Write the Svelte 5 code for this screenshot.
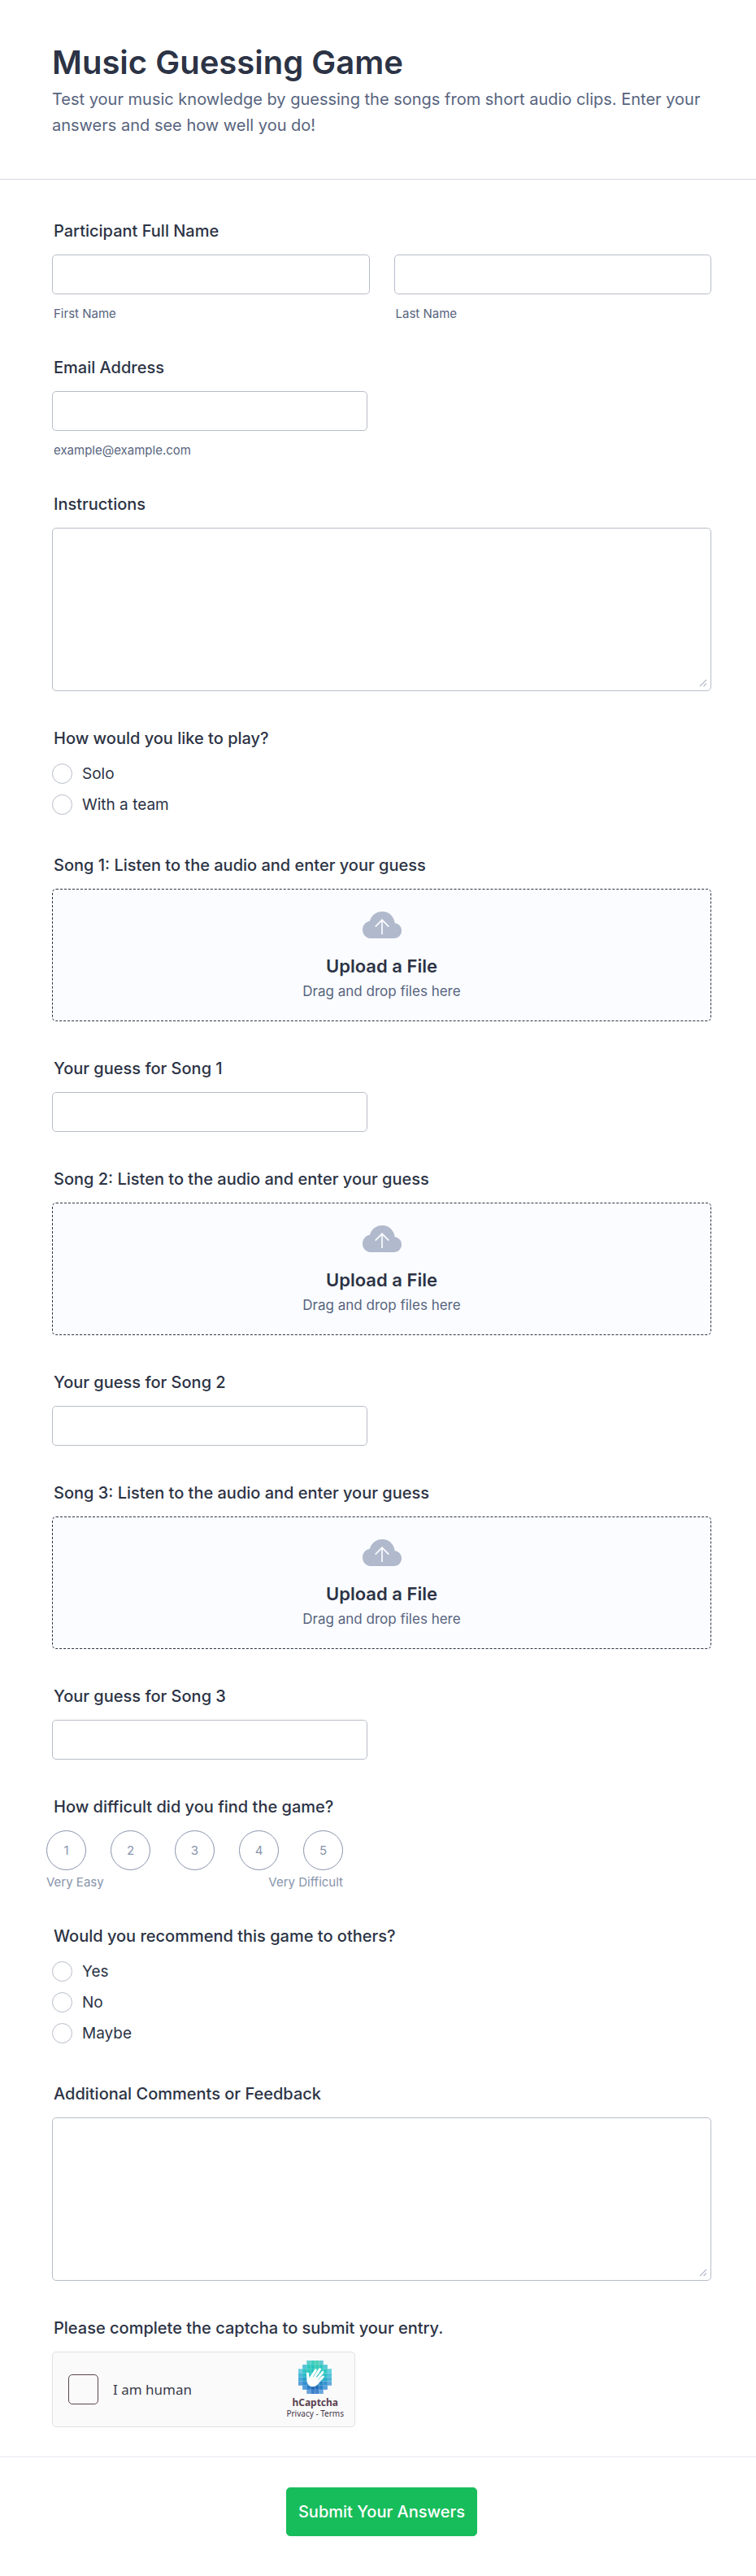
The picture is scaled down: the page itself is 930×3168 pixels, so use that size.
<script>
  const songs = [1, 2, 3];
  const levels = [1, 2, 3, 4, 5];
  const modes = ["Solo", "With a team"];
  const answers = ["Yes", "No", "Maybe"];

  let mode = $state("");
  let recommend = $state("");
  let difficulty = $state(0);

  // captcha badge: 8x8 mosaic, one entry per row
  const mosaic = [
    { from: 2, colours: ["#5fd0cf", "#3fcfc0", "#4bd2b8", "#62c9d4"] },
    { from: 1, colours: ["#55c4d8", "#2fc9bf", "#27c5bb", "#36cdb6", "#2bc8c0", "#58c8d6"] },
    { from: 0, colours: ["#6bcbe0", "#31c5c4", "#2ccabd", "#25c3bd", "#30cbb9", "#28c6be", "#33c8c2", "#66cfdd"] },
    { from: 0, colours: ["#4bb8d9", "#2bbcc8", "#29c6c2", "#23bfc3", "#2bc6c0", "#25c0c2", "#2fc2c6", "#54c2db"] },
    { from: 0, colours: ["#4aa9d8", "#259fc9", "#27b3c7", "#25adc7", "#27b2c5", "#28b0c8", "#2aacca", "#4db4da"] },
    { from: 0, colours: ["#5a9ed9", "#318fcf", "#2683c6", "#288fc7", "#2b95c9", "#298ac7", "#3694d0", "#62a9dd"] },
    { from: 1, colours: ["#529cd8", "#2c7ec8", "#2067b8", "#246fbd", "#2f83ca", "#579fd9"] },
    { from: 2, colours: ["#68a4dc", "#3c80cb", "#3f84ce", "#6ba8dd"] },
  ];
</script>

<form class="form" onsubmit={(e) => e.preventDefault()}>
  <header>
    <h1>Music Guessing Game</h1>
    <p>Test your music knowledge by guessing the songs from short audio clips. Enter your answers and see how well you do!</p>
  </header>

  <div class="questions">
    <fieldset>
      <legend class="title">Participant Full Name</legend>
      <div class="names">
        <div class="stack">
          <input class="box" id="first" type="text" />
          <label class="hint" for="first">First Name</label>
        </div>
        <div class="stack">
          <input class="box" id="last" type="text" />
          <label class="hint" for="last">Last Name</label>
        </div>
      </div>
    </fieldset>

    <div class="stack">
      <label class="title" for="email">Email Address</label>
      <input class="box half" id="email" type="email" aria-describedby="email-hint" />
      <span class="hint" id="email-hint">example@example.com</span>
    </div>

    <div class="stack">
      <label class="title" for="instructions">Instructions</label>
      <textarea class="box" id="instructions"></textarea>
    </div>

    <fieldset>
      <legend class="title">How would you like to play?</legend>
      <div class="options">
        {#each modes as m}
          <label><input type="radio" name="mode" value={m} bind:group={mode} />{m}</label>
        {/each}
      </div>
    </fieldset>

    {#each songs as n}
      <div class="stack">
        <label class="title" for="song-{n}">Song {n}: Listen to the audio and enter your guess</label>
        <label class="drop">
          <input class="sr" id="song-{n}" type="file" accept="audio/*" />
          <svg width="48" height="33" viewBox="0 0 48 33" aria-hidden="true">
            <path fill="#b1bacc" d="M10.5 33C4.5 33 0 28.4 0 22.4c0-5.600 3.800-9.900 8.900-10.700C10.700 4.900 16.700 0 24.300 0c8.100 0 14.400 6.100 15.400 14.300C44.400 14.800 48 18.600 48 23.500 48 28.800 43.900 33 38.600 33z" />
            <path fill="none" stroke="#fbfcff" stroke-width="1.700" d="M24 28V10.600M15.700 18.600 24 10.300l8.300 8.300" />
          </svg>
          <span class="drop-title">Upload a File</span>
          <span class="drop-text">Drag and drop files here</span>
        </label>
      </div>

      <div class="stack">
        <label class="title" for="guess-{n}">Your guess for Song {n}</label>
        <input class="box half" id="guess-{n}" type="text" />
      </div>
    {/each}

    <fieldset>
      <legend class="title">How difficult did you find the game?</legend>
      <div class="scale">
        <div class="levels">
          {#each levels as l}
            <label class="level" class:picked={difficulty === l}>
              <input class="sr" type="radio" name="difficulty" value={l} bind:group={difficulty} />{l}
            </label>
          {/each}
        </div>
        <div class="ends"><span>Very Easy</span><span>Very Difficult</span></div>
      </div>
    </fieldset>

    <fieldset>
      <legend class="title">Would you recommend this game to others?</legend>
      <div class="options">
        {#each answers as a}
          <label><input type="radio" name="recommend" value={a} bind:group={recommend} />{a}</label>
        {/each}
      </div>
    </fieldset>

    <div class="stack">
      <label class="title" for="comments">Additional Comments or Feedback</label>
      <textarea class="box" id="comments"></textarea>
    </div>

    <div class="stack">
      <div class="title">Please complete the captcha to submit your entry.</div>
      <div class="captcha">
        <label class="human"><input type="checkbox" />I am human</label>
        <div class="brand">
          <svg width="41" height="41" viewBox="0 0 40 40" aria-hidden="true">
            {#each mosaic as line, row}
              {#each line.colours as c, i}
                <rect x={(line.from + i) * 5} y={row * 5} width="5" height="5" fill={c} />
              {/each}
            {/each}
            <g fill="none" stroke="#fff" stroke-linecap="round">
              <path stroke-width="2.900" d="M13.500 23 20.800 11.600M17 24 25.800 10.600M20 25.500 29.200 14M22 27.500 29.500 19.500" />
              <path stroke-width="3" d="M12.200 24.500 11.200 16" />
            </g>
            <path fill="#fff" d="M10.800 18c-.8 4.600-.8 8 .8 10.500 1.800 2.700 5.600 3.600 8.800 2.200 2-.9 3.200-2.300 4.400-4l-1.800-6.200-5-1-4.300 2.600z" />
          </svg>
          <b>hCaptcha</b>
          <span><a href="#privacy">Privacy</a> - <a href="#terms">Terms</a></span>
        </div>
      </div>
    </div>
  </div>

  <footer>
    <button type="submit">Submit Your Answers</button>
  </footer>
</form>

<style>
  :global(body) { background: #fff; }
  .form { font-family: Inter, "Liberation Sans", sans-serif; color: #2c3345; background: #fff; }
  header { padding: 53px 55px 50px 64px; border-bottom: 1px solid #d7d8e1; }
  h1 { margin: 0 0 5px; font-size: 40px; line-height: 48px; font-weight: 600; }
  header p { margin: 0; font-size: 20px; line-height: 32px; color: #57647e; }

  .questions { display: flex; flex-direction: column; gap: 46px; padding: 51px 55px 36px 64px; }
  fieldset { border: 0; margin: 0; padding: 0; min-width: 0; }
  .stack { display: flex; flex-direction: column; min-width: 0; }
  .title { display: block; margin: 0 0 17px; padding: 0 2px; font-size: 20px; line-height: 24px; font-weight: 500; }
  .hint { margin-top: 16px; padding: 0 2px; font-size: 15px; line-height: 16px; color: #57647e; }
  .names { display: grid; grid-template-columns: 1fr 1fr; gap: 30px; }

  .box { box-sizing: border-box; width: 100%; height: 49px; margin: 0; padding: 0 12px; border: 1px solid #b8bdc9; border-radius: 5px; background: #fff; color: inherit; font: inherit; font-size: 20px; }
  .half { width: 388px; max-width: 100%; }
  textarea.box { display: block; height: 201px; padding: 12px; resize: vertical; }
  textarea::-webkit-resizer { background: url("data:image/svg+xml,%3Csvg xmlns='http://www.w3.org/2000/svg' width='15' height='15'%3E%3Cpath d='M2 10l8-8M6.500 10l3.500-3.500' stroke='%23b8bdcd' stroke-width='1.300'/%3E%3C/svg%3E") no-repeat; }

  .options { display: flex; flex-direction: column; align-items: flex-start; gap: 9px; padding-bottom: 2px; }
  .options label { display: flex; align-items: center; gap: 12px; font-size: 19px; line-height: 29px; }
  .options input { appearance: none; box-sizing: border-box; width: 25px; height: 25px; margin: 0; border: 1px solid #b8bdc9; border-radius: 50%; background: #fff; }
  .options input:checked { border: 8px solid #2e69ff; }

  .drop { display: flex; flex-direction: column; align-items: center; box-sizing: border-box; padding: 27px 12px 25px; border: 1px dashed #2c3345; border-radius: 5px; background: #fbfcff; cursor: pointer; }
  .drop-title { margin-top: 20px; font-size: 22px; line-height: 28px; font-weight: 600; }
  .drop-text { margin-top: 6px; font-size: 17px; line-height: 22px; color: #57647e; }
  .sr { position: absolute; width: 1px; height: 1px; margin: 0; opacity: 0; }

  .scale { width: 365px; max-width: 100%; margin-left: -7px; color: #8894ab; font-size: 15px; line-height: 16px; }
  .levels { display: flex; justify-content: space-between; }
  .level { display: flex; align-items: center; justify-content: center; box-sizing: border-box; width: 49px; height: 49px; border: 1px solid #8894ab; border-radius: 50%; cursor: pointer; }
  .level.picked { background: #8894ab; color: #fff; }
  .ends { display: flex; justify-content: space-between; margin-top: 7px; }

  .captcha { display: flex; align-items: center; justify-content: space-between; box-sizing: border-box; width: 373px; max-width: 100%; height: 93px; padding: 0 13px 0 19px; border: 1px solid #e0e0e4; border-radius: 5px; background: #fafafa; font-family: "Noto Sans", sans-serif; color: #44354a; }
  .human { display: flex; align-items: center; gap: 18px; font-size: 17px; color: #3a3a4a; }
  .human input { appearance: none; box-sizing: border-box; width: 37px; height: 37px; margin: 0; border: 1px solid #5b4450; border-radius: 5px; background: #fafafa; }
  .human input:checked { background: #00838f; }
  .brand { display: flex; flex-direction: column; align-items: center; font-size: 10px; line-height: 12px; }
  .brand b { margin-top: 3px; font-size: 12px; line-height: 15px; color: #5b4450; }
  .brand a { color: inherit; text-decoration: none; }

  footer { display: flex; justify-content: center; padding: 37px 55px 49px 64px; border-top: 1px solid #ebebf2; }
  button { height: 60px; padding: 0 14px; border: 1px solid #18bd5b; border-radius: 5px; background: #18bd5b; color: #fff; font: inherit; font-size: 20px; font-weight: 500; cursor: pointer; }
</style>
